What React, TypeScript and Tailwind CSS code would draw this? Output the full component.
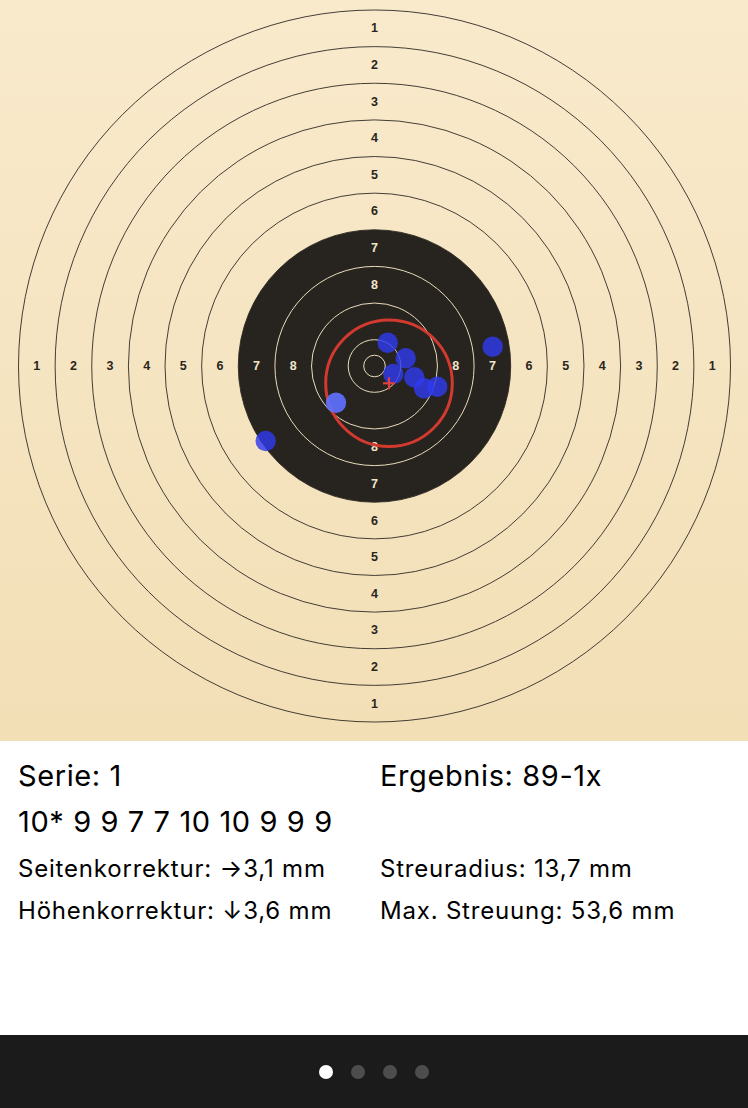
const CX = 374.5;
const CY = 366;
const SCALE = 356 / 77.75; // px per mm, ring 1 = 155.5 mm diameter

// air pistol target, radius of ring n in px
const ringR = (n: number) => SCALE * (5.75 + 8 * (10 - n));
const INNER_TEN = 10.8;

const RINGS = [1, 2, 3, 4, 5, 6, 7, 8, 9, 10];
const LABELS = [1, 2, 3, 4, 5, 6, 7, 8];

type Shot = { x: number; y: number; last?: boolean };

const SHOTS: Shot[] = [
  { x: 387.7, y: 342.7 },
  { x: 405.7, y: 358.3 },
  { x: 393.3, y: 374 },
  { x: 414.3, y: 377.3 },
  { x: 424, y: 388.3 },
  { x: 437.3, y: 386.7 },
  { x: 265.7, y: 441 },
  { x: 492.7, y: 346.7 },
  { x: 336, y: 402.7, last: true },
];

function Target() {
  return (
    <svg width={748} height={741} viewBox="0 0 748 741" className="block">
      <circle cx={CX} cy={CY} r={ringR(7)} fill="#27231f" />
      {RINGS.map((n) => (
        <circle
          key={n}
          cx={CX}
          cy={CY}
          r={ringR(n)}
          fill="none"
          stroke={n >= 8 ? "#e9dcbc" : "#2f2a24"}
          strokeWidth={n >= 8 ? 1 : 0.9}
        />
      ))}
      <circle cx={CX} cy={CY} r={INNER_TEN} fill="none" stroke="#e9dcbc" strokeWidth={1} />

      <g className="font-['Liberation_Sans'] font-bold text-[12.5px]" textAnchor="middle" dominantBaseline="central">
        {LABELS.map((n) => {
          const d = (ringR(n) + ringR(n + 1)) / 2;
          const fill = n >= 7 ? "#f1e6cc" : "#2a2520";
          return (
            <g key={n} fill={fill}>
              <text x={CX} y={CY - d}>{n}</text>
              <text x={CX} y={CY + d}>{n}</text>
              <text x={CX - d} y={CY}>{n}</text>
              <text x={CX + d} y={CY}>{n}</text>
            </g>
          );
        })}
      </g>

      <circle cx={389} cy={383.3} r={63.3} fill="none" stroke="#d2392f" strokeWidth={3} />

      {SHOTS.map((s, i) => (
        <circle
          key={i}
          cx={s.x}
          cy={s.y}
          r={10.2}
          fill={s.last ? "rgba(95,112,255,0.92)" : "rgba(48,58,238,0.82)"}
        />
      ))}

      {/* mean point of impact */}
      <g stroke="#e0403a" strokeWidth={2.2}>
        <line x1={383} y1={383.3} x2={395} y2={383.3} />
        <line x1={389} y1={377.3} x2={389} y2={389.3} />
      </g>
    </svg>
  );
}

export default function App() {
  return (
    <div className="flex h-[1108px] w-[748px] flex-col bg-white font-['Inter',sans-serif] text-black">
      <div className="h-[741px] shrink-0 bg-gradient-to-b from-[#f9eacc] to-[#f2dfb6]">
        <Target />
      </div>

      <div className="flex-1 px-[18px] pt-[12px]">
        <div className="grid grid-cols-[362px_1fr] text-[29px] leading-[46px] tracking-[0.6px]">
          <div>Serie: 1</div>
          <div>Ergebnis: 89-1x</div>
          <div>10* 9 9 7 7 10 10 9 9 9</div>
          <div />
        </div>
        <div className="mt-[3px] grid grid-cols-[362px_1fr] text-[24px] leading-[42px] tracking-[0.8px]">
          <div>Seitenkorrektur: →3,1 mm</div>
          <div>Streuradius: 13,7 mm</div>
          <div>Höhenkorrektur: ↓3,6 mm</div>
          <div>Max. Streuung: 53,6 mm</div>
        </div>
      </div>

      <div className="flex h-[73px] shrink-0 items-center justify-center gap-[18px] bg-[#1b1b1b]">
        <span className="h-[14px] w-[14px] rounded-full bg-white" />
        <span className="h-[14px] w-[14px] rounded-full bg-[#4d4d4d]" />
        <span className="h-[14px] w-[14px] rounded-full bg-[#4d4d4d]" />
        <span className="h-[14px] w-[14px] rounded-full bg-[#4d4d4d]" />
      </div>
    </div>
  );
}
